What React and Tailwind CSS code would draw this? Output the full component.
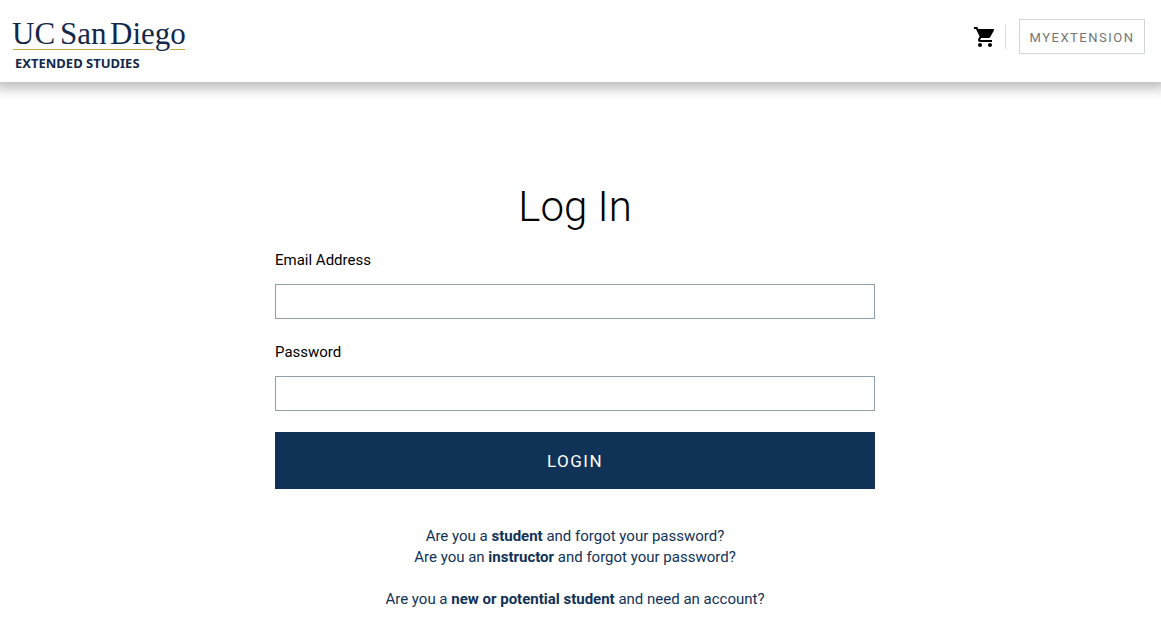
import React, { useState } from 'react';
import { MdShoppingCart } from 'react-icons/md';

const Logo = () => (
  <a href="#home" aria-label="UC San Diego Extended Studies">
    <svg width="180" height="68" viewBox="0 0 180 68" fill="#14284b">
      <path d="M1 41.5H173" stroke="#c9a53c" strokeWidth="1" />
      {/* white outline breaks the gold rule around the "g" */}
      <text
        y="36"
        fontSize="31"
        fontFamily="'Liberation Serif', serif"
        stroke="#fff"
        strokeWidth="3"
        paintOrder="stroke"
      >
        <tspan x="0">UC</tspan>
        <tspan x="48">San</tspan>
        <tspan x="98">Diego</tspan>
      </text>
      <text x="3" y="60" fontSize="13" fontWeight="700" fontFamily="'Noto Sans', sans-serif">
        EXTENDED STUDIES
      </text>
    </svg>
  </a>
);

const Header = () => (
  <header className="flex items-start justify-between h-[82px] pl-3 pr-4 bg-white shadow-[0_0_12px_6px_rgba(0,0,0,0.28)]">
    <div className="pt-2">
      <Logo />
    </div>
    <div className="flex items-center pt-[19px]">
      <a href="#cart" aria-label="Shopping cart" className="pr-2 text-black">
        <MdShoppingCart size={24} />
      </a>
      <div className="h-6 w-px mr-[13px] bg-[#d8dadb]" />
      <button
        type="button"
        className="h-[35px] w-[126px] pt-0.5 border border-[#d3d6d8] text-[13px] tracking-[1.5px] text-[#757575]"
      >
        MYEXTENSION
      </button>
    </div>
  </header>
);

const Field = ({ id, label, type, value, onChange }) => (
  <div className="flex flex-col gap-[13px]">
    <label htmlFor={id} className="text-[15px] leading-[21px]">
      {label}
    </label>
    <input
      id={id}
      type={type}
      value={value}
      onChange={(e) => onChange(e.target.value)}
      className="h-[35px] w-full px-2 border border-[#90a0aa] text-[15px] outline-none"
    />
  </div>
);

const App = () => {
  const [email, setEmail] = useState('');
  const [password, setPassword] = useState('');

  return (
    <div className="min-h-screen bg-white text-black font-['Roboto',sans-serif]">
      <Header />
      <main className="flex flex-col items-center pt-[101px] pb-6 pr-[11px]">
        <h1 className="mb-[19px] text-[42px] leading-[48px] font-light">Log In</h1>

        <form className="w-full max-w-[600px]" onSubmit={(e) => e.preventDefault()}>
          <div className="flex flex-col gap-[23px]">
            <Field id="email" label="Email Address" type="email" value={email} onChange={setEmail} />
            <Field id="password" label="Password" type="password" value={password} onChange={setPassword} />
          </div>
          <button
            type="submit"
            className="mt-[21px] h-[57px] w-full pt-0.5 bg-[#103257] text-[17px] tracking-[1.5px] text-white"
          >
            LOGIN
          </button>
        </form>

        <div className="flex flex-col items-center mt-[37px] text-[15px] leading-[21px] text-[#103257]">
          <a href="#student-password">
            Are you a <b>student</b> and forgot your password?
          </a>
          <a href="#instructor-password">
            Are you an <b>instructor</b> and forgot your password?
          </a>
          <a href="#new-account" className="mt-[21px]">
            Are you a <b>new or potential student</b> and need an account?
          </a>
        </div>
      </main>
    </div>
  );
};

export default App;
